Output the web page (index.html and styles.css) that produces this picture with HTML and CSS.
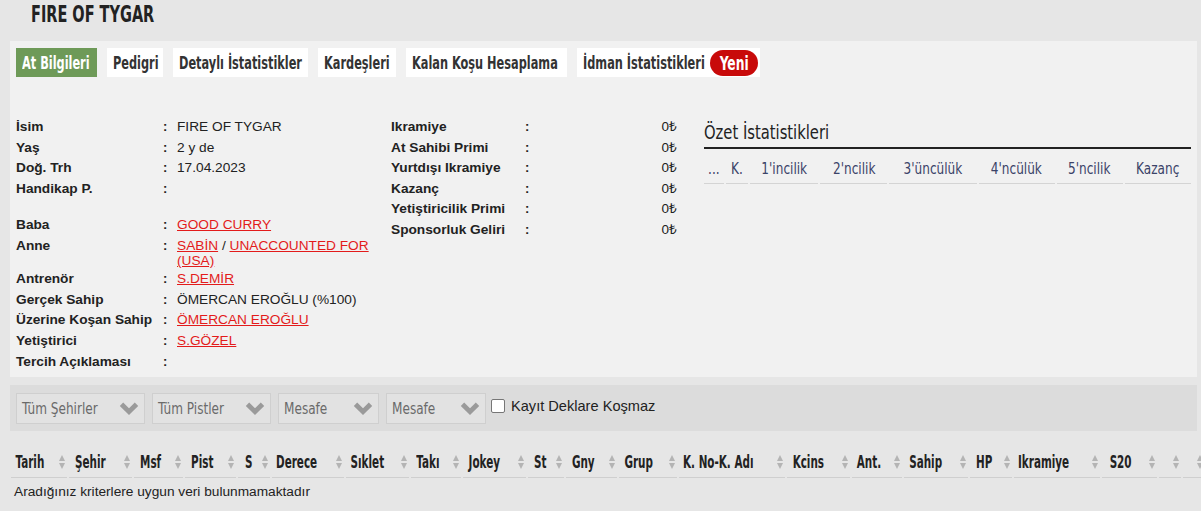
FILE: index.html
```html
<!DOCTYPE html>
<html lang="tr">
<head>
    <meta charset="UTF-8">
    <meta name="viewport" content="width=device-width, initial-scale=1.0">
    <title>FIRE OF TYGAR - At Bilgileri</title>
    <link rel="stylesheet" href="styles.css">
</head>
<body>
    <h1 class="title"><span class="sq">FIRE OF TYGAR</span></h1>

    <div class="panel">
        <!-- Tabs -->
        <div class="tabs">
            <a class="tab active t1"><span class="sq">At Bilgileri</span></a>
            <a class="tab t2"><span class="sq">Pedigri</span></a>
            <a class="tab t3"><span class="sq">Detaylı İstatistikler</span></a>
            <a class="tab t4"><span class="sq">Kardeşleri</span></a>
            <a class="tab t5"><span class="sq">Kalan Koşu Hesaplama</span></a>
            <a class="tab t6"><span class="sq">İdman İstatistikleri</span><span class="badge"><span class="sq">Yeni</span></span></a>
        </div>

        <div class="content">
            <table class="info">
                <tr><td class="lbl">İsim</td><td class="sep">:</td><td>FIRE OF TYGAR</td></tr>
                <tr><td class="lbl">Yaş</td><td class="sep">:</td><td>2 y de</td></tr>
                <tr><td class="lbl">Doğ. Trh</td><td class="sep">:</td><td>17.04.2023</td></tr>
                <tr><td class="lbl">Handikap P.</td><td class="sep">:</td><td></td></tr>
                <tr class="spacer"><td colspan="3"></td></tr>
                <tr><td class="lbl">Baba</td><td class="sep">:</td><td><a href="#">GOOD CURRY</a></td></tr>
                <tr class="two"><td class="lbl">Anne</td><td class="sep">:</td><td><a href="#">SABİN</a> / <a href="#">UNACCOUNTED FOR (USA)</a></td></tr>
                <tr><td class="lbl">Antrenör</td><td class="sep">:</td><td><a href="#">S.DEMİR</a></td></tr>
                <tr><td class="lbl">Gerçek Sahip</td><td class="sep">:</td><td>ÖMERCAN EROĞLU (%100)</td></tr>
                <tr><td class="lbl">Üzerine Koşan Sahip</td><td class="sep">:</td><td><a href="#">ÖMERCAN EROĞLU</a></td></tr>
                <tr><td class="lbl">Yetiştirici</td><td class="sep">:</td><td><a href="#">S.GÖZEL</a></td></tr>
                <tr><td class="lbl">Tercih Açıklaması</td><td class="sep">:</td><td></td></tr>
            </table>

            <table class="info money">
                <tr><td class="lbl">Ikramiye</td><td class="sep">:</td><td class="amt">0₺</td></tr>
                <tr><td class="lbl">At Sahibi Primi</td><td class="sep">:</td><td class="amt">0₺</td></tr>
                <tr><td class="lbl">Yurtdışı Ikramiye</td><td class="sep">:</td><td class="amt">0₺</td></tr>
                <tr><td class="lbl">Kazanç</td><td class="sep">:</td><td class="amt">0₺</td></tr>
                <tr><td class="lbl">Yetiştiricilik Primi</td><td class="sep">:</td><td class="amt">0₺</td></tr>
                <tr><td class="lbl">Sponsorluk Geliri</td><td class="sep">:</td><td class="amt">0₺</td></tr>
            </table>

            <div class="summary">
                <h2 class="summary-title"><span class="sq">Özet İstatistikleri</span></h2>
                <table class="summary-table">
                    <tr>
                        <th class="c1"><div class="sh"><span class="sq">...</span></div></th>
                        <th class="c2"><div class="sh"><span class="sq">K.</span></div></th>
                        <th class="c3"><div class="sh"><span class="sq">1'incilik</span></div></th>
                        <th class="c4"><div class="sh"><span class="sq">2'ncilik</span></div></th>
                        <th class="c5"><div class="sh"><span class="sq">3'üncülük</span></div></th>
                        <th class="c6"><div class="sh"><span class="sq">4'ncülük</span></div></th>
                        <th class="c7"><div class="sh"><span class="sq">5'ncilik</span></div></th>
                        <th class="c8"><div class="sh"><span class="sq">Kazanç</span></div></th>
                    </tr>
                </table>
            </div>
        </div>
    </div>

    <!-- Filters -->
    <div class="filters">
        <div class="select w1"><span class="sq">Tüm Şehirler</span><svg class="chev" viewBox="0 0 20 14"><polyline points="3,3 10,10 17,3" /></svg></div>
        <div class="select w2"><span class="sq">Tüm Pistler</span><svg class="chev" viewBox="0 0 20 14"><polyline points="3,3 10,10 17,3" /></svg></div>
        <div class="select w3"><span class="sq">Mesafe</span><svg class="chev" viewBox="0 0 20 14"><polyline points="3,3 10,10 17,3" /></svg></div>
        <div class="select w4"><span class="sq">Mesafe</span><svg class="chev" viewBox="0 0 20 14"><polyline points="3,3 10,10 17,3" /></svg></div>
        <label class="check"><span class="box"></span>Kayıt Deklare Koşmaz</label>
    </div>

    <!-- Races -->
    <div class="races">
        <table class="race-table">
            <colgroup>
                <col style="width:56px"><col style="width:63px"><col style="width:49px"><col style="width:51px">
                <col style="width:32px"><col style="width:72px"><col style="width:63px"><col style="width:50px">
                <col style="width:63px"><col style="width:36px"><col style="width:51px"><col style="width:58px">
                <col style="width:106px"><col style="width:63px"><col style="width:50px"><col style="width:64px">
                <col style="width:42px"><col style="width:86px"><col style="width:55px"><col style="width:22px">
                <col style="width:22px">
            </colgroup>
            <tr>
                <th><div class="th"><span class="sq">Tarih</span><i class="sort"></i></div></th>
                <th><div class="th"><span class="sq">Şehir</span><i class="sort"></i></div></th>
                <th><div class="th"><span class="sq">Msf</span><i class="sort"></i></div></th>
                <th><div class="th"><span class="sq">Pist</span><i class="sort"></i></div></th>
                <th><div class="th"><span class="sq">S</span><i class="sort"></i></div></th>
                <th><div class="th"><span class="sq">Derece</span><i class="sort"></i></div></th>
                <th><div class="th"><span class="sq">Sıklet</span><i class="sort"></i></div></th>
                <th><div class="th"><span class="sq">Takı</span><i class="sort"></i></div></th>
                <th><div class="th"><span class="sq">Jokey</span><i class="sort"></i></div></th>
                <th><div class="th"><span class="sq">St</span><i class="sort"></i></div></th>
                <th><div class="th"><span class="sq">Gny</span><i class="sort"></i></div></th>
                <th><div class="th"><span class="sq">Grup</span><i class="sort"></i></div></th>
                <th><div class="th"><span class="sq">K. No-K. Adı</span><i class="sort"></i></div></th>
                <th><div class="th"><span class="sq">Kcins</span><i class="sort"></i></div></th>
                <th><div class="th"><span class="sq">Ant.</span><i class="sort"></i></div></th>
                <th><div class="th"><span class="sq">Sahip</span><i class="sort"></i></div></th>
                <th><div class="th"><span class="sq">HP</span><i class="sort"></i></div></th>
                <th><div class="th"><span class="sq">Ikramiye</span><i class="sort"></i></div></th>
                <th><div class="th"><span class="sq">S20</span><i class="sort"></i></div></th>
                <th><div class="th"><i class="sort"></i></div></th>
                <th><div class="th"><i class="sort"></i></div></th>
            </tr>
        </table>
        <p class="empty">Aradığınız kriterlere uygun veri bulunmamaktadır</p>
    </div>
</body>
</html>
```

FILE: styles.css
```css
body {
    margin: 0;
    font-family: "Liberation Sans", Arial, sans-serif;
    background-color: #e6e6e6;
    color: #222;
    overflow: hidden;
}

/* condensed headline text: no narrow font offline, so squeeze a condensed face */
.sq {
    display: inline-block;
    min-width: 0;
    white-space: nowrap;
    transform-origin: left center;
}

.title {
    margin: 0;
    height: 41px;
    padding-left: 31px;
    font-family: "DejaVu Sans Condensed", "DejaVu Sans", sans-serif;
    font-weight: bold;
    font-size: 23px;
    line-height: 29px;
    color: #222;
}

.title .sq {
    transform: scaleX(0.7);
}

.panel {
    margin: 0 4px 0 10px;
    padding: 7px 6px 5px 6px;
    background-color: #f1f1f1;
}

.tabs {
    display: flex;
    gap: 10px;
}

.tab {
    display: flex;
    align-items: center;
    box-sizing: border-box;
    height: 29px;
    padding: 0 0 0 6px;
    background-color: #fff;
    color: #333;
    font-family: "DejaVu Sans Condensed", "DejaVu Sans", sans-serif;
    font-weight: bold;
    font-size: 18px;
    cursor: pointer;
}

.tab .sq {
    transform: scaleX(0.7);
}

.tab.active {
    background-color: #6e9a58;
    color: #fff;
}

.t1 { width: 81px; }
.t2 { width: 56px; }
.t3 { width: 135px; }
.t4 { width: 78px; }
.t5 { width: 161px; }
.t6 { width: 183px; }

.t6 > .sq {
    flex: 1 1 0;
}

.badge {
    display: flex;
    align-items: center;
    justify-content: center;
    flex: none;
    width: 48px;
    height: 26px;
    margin-right: 2px;
    border-radius: 13px;
    background-color: #c80a0a;
    color: #fff;
    font-size: 19px;
}

.badge .sq {
    transform: scaleX(0.72);
    transform-origin: center;
}

.content {
    display: flex;
    align-items: flex-start;
    margin-top: 40px;
}

.info {
    border-collapse: collapse;
    font-size: 13.7px;
    line-height: 14.6px;
}

.info td {
    padding: 3px 0;
    vertical-align: top;
}

.info .two td {
    padding-bottom: 1px;
}

.info .lbl {
    width: 147px;
    font-weight: bold;
}

.info .sep {
    width: 14px;
    font-weight: bold;
    font-size: 13px;
}

.info td:last-child {
    width: 195px;
}

.info .spacer td {
    height: 16px;
    padding: 0;
}

.info a {
    color: #e31b1b;
}

.money {
    margin-left: 19px;
}

.money .lbl {
    width: 134px;
}

.money .sep {
    width: 20px;
}

.money td.amt {
    width: 132px;
    text-align: right;
    font-size: 13.5px;
}

.summary {
    width: 487px;
    margin-left: 27px;
    margin-top: 3px;
}

.summary-title {
    margin: 0;
    padding-bottom: 3px;
    border-bottom: 2px solid #222;
    font-family: "DejaVu Sans Condensed", "DejaVu Sans", sans-serif;
    font-weight: normal;
    font-size: 20px;
    line-height: 24px;
}

.summary-title .sq {
    transform: scaleX(0.82);
}

.summary-table {
    table-layout: fixed;
    width: 491px;
    border-spacing: 2px 0;
    margin-left: -2px;
    margin-top: 4px;
}

.summary-table th {
    padding: 6px 0 5px;
    border-bottom: 1px solid #d4d4d4;
    color: #3b4368;
    font-family: "DejaVu Sans Condensed", "DejaVu Sans", sans-serif;
    font-weight: normal;
    font-size: 16px;
}

.sh {
    display: flex;
    justify-content: center;
}

.sh .sq {
    transform: scaleX(0.84);
    transform-origin: center;
}

.c1 { width: 20px; }
.c2 { width: 22px; }
.c3 { width: 68px; }
.c4 { width: 67px; }
.c5 { width: 87px; }
.c6 { width: 76px; }
.c7 { width: 66px; }
.c8 { width: 66px; }

.filters {
    display: flex;
    align-items: center;
    gap: 7px;
    height: 46px;
    margin: 8px 4px 0 10px;
    padding: 0 6px;
    background-color: #dcdcdc;
}

.select {
    display: flex;
    align-items: center;
    box-sizing: border-box;
    height: 31px;
    padding: 0 4px 0 5px;
    border: 1px solid #cfcfcf;
    background-color: #e2e2e2;
    color: #6a6a6a;
    font-family: "DejaVu Sans Condensed", "DejaVu Sans", sans-serif;
    font-size: 16px;
}

.select .sq {
    flex: 1 1 0;
    transform: scaleX(0.84);
}

.w1 { width: 129px; }
.w2 { width: 119px; }
.w3 { width: 101px; }
.w4 { width: 100px; }

.chev {
    flex: none;
    width: 22px;
    height: 15px;
    fill: none;
    stroke: #9a9a9a;
    stroke-width: 4.5;
}

.check {
    display: flex;
    align-items: center;
    gap: 6px;
    margin-left: -2px;
    margin-top: -5px;
    font-size: 14.6px;
    color: #222;
}

.box {
    display: inline-block;
    width: 12px;
    height: 12px;
    border: 1px solid #767676;
    border-radius: 2px;
    background-color: #fff;
}

.races {
    margin-top: 16px;
    overflow: hidden;
}

.race-table {
    table-layout: fixed;
    border-collapse: separate;
    border-spacing: 2px 0;
    margin-left: 9px;
    width: 1198px;
}

.race-table th {
    padding: 0;
    border-bottom: 1px solid #cfcfcf;
}

.th {
    display: flex;
    align-items: center;
    height: 30px;
    padding: 0 1px 0 4px;
    font-family: "DejaVu Sans Condensed", "DejaVu Sans", sans-serif;
    font-weight: bold;
    font-size: 17px;
    color: #222;
}

.th .sq {
    flex: 1 1 0;
    transform: scaleX(0.68);
}

.sort {
    position: relative;
    flex: none;
    width: 7px;
    height: 14px;
    margin-left: auto;
}

.sort::before,
.sort::after {
    content: "";
    position: absolute;
    left: 0;
    border-left: 3.5px solid transparent;
    border-right: 3.5px solid transparent;
}

.sort::before {
    top: 0;
    border-bottom: 6px solid #b4b4b4;
}

.sort::after {
    bottom: 0;
    border-top: 6px solid #b4b4b4;
}

.empty {
    margin: 6px 0 0 14px;
    font-size: 13.7px;
}
```
